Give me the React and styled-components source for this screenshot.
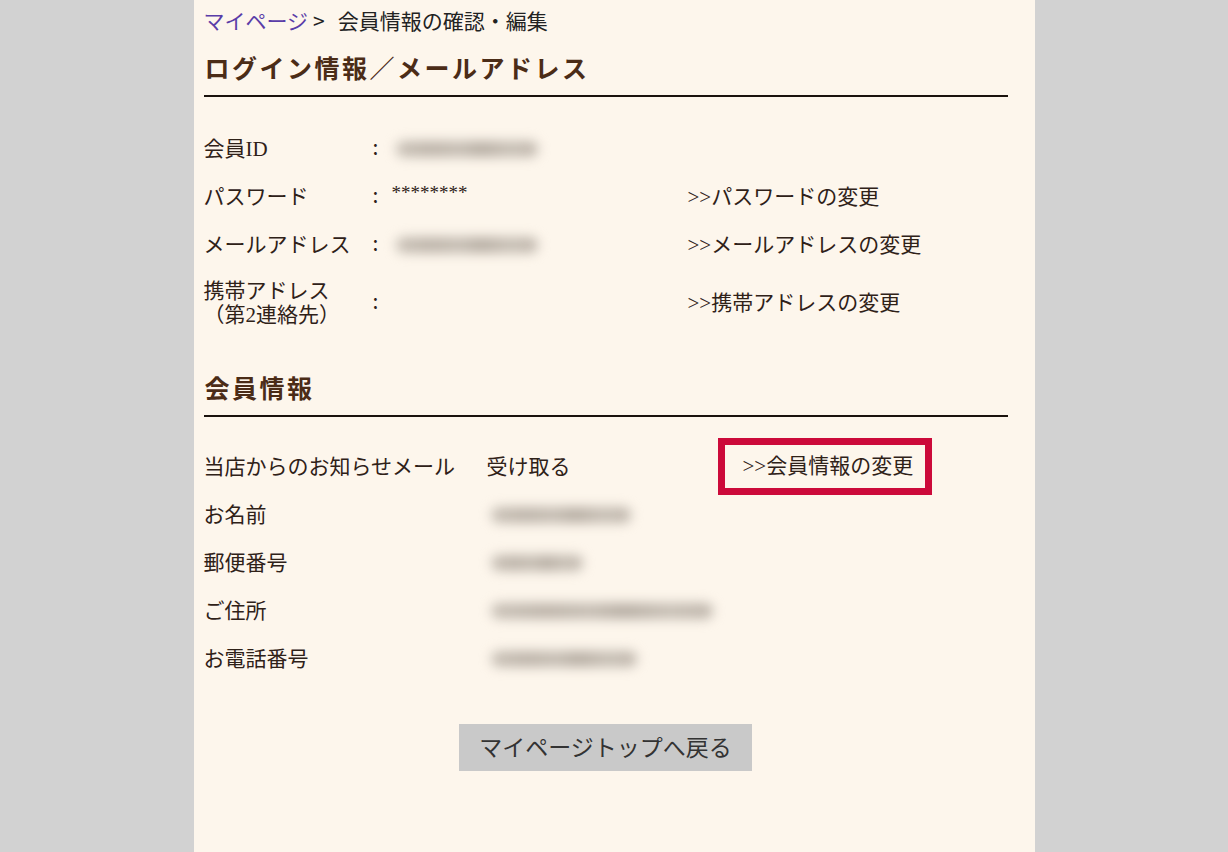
import React from 'react';
import styled, { createGlobalStyle } from 'styled-components';

const GlobalStyle = createGlobalStyle`
  html, body {
    margin: 0;
    padding: 0;
    background: #d2d2d2;
  }
`;

const serif = `"Liberation Serif", "Noto Sans CJK JP", serif`;
const sans = `"Noto Sans CJK JP", "Noto Sans", sans-serif`;

const Page = styled.div`
  width: 841px;
  min-height: 852px;
  margin: 0 auto;
  box-sizing: border-box;
  padding: 6px 27px 40px 10px;
  background: #fdf6ec;
  color: #2f2118;
  font-family: ${serif};
  font-size: 21px;
`;

const Breadcrumb = styled.div`
  font-family: ${sans};
  font-size: 21px;
  line-height: 28px;
  color: #222;
  a {
    color: #5a3da8;
    text-decoration: none;
  }
  span.sep {
    margin: 0 13px 0 5px;
  }
`;

const Heading = styled.h2`
  margin: ${(p) => p.$top}px 0 0;
  padding: 0 0 8px 1px;
  font-size: 25px;
  line-height: 34px;
  font-weight: 700;
  letter-spacing: 2.5px;
  color: #4b2c17;
  border-bottom: 2px solid #1a120d;
`;

const Table = styled.div`
  padding-top: ${(p) => p.$top}px;
`;

const Row = styled.div`
  display: grid;
  grid-template-columns: ${(p) => p.$cols};
  align-items: center;
  height: ${(p) => p.$h || 48}px;
  line-height: 24px;
`;

const Label = styled.div`
  white-space: nowrap;
`;

const Colon = styled.div`
  font-family: ${sans};
  margin-left: -2px;
  transform: translateY(-3px);
`;

const Value = styled.div`
  display: flex;
  align-items: center;
`;

const Blur = styled.span`
  display: inline-block;
  width: ${(p) => p.$w}px;
  height: 16px;
  margin-left: 4px;
  border-radius: 8px;
  background: linear-gradient(
    90deg,
    #c8c0b6 0%,
    #bcb3a9 25%,
    #c4bcb2 45%,
    #b6ada3 60%,
    #c6beb4 80%,
    #beb5ab 100%
  );
  filter: blur(6px);
`;

const Stars = styled.span`
  font-size: 19px;
  transform: translateY(-4px);
`;

const Link = styled.a`
  color: #2f2118;
  text-decoration: none;
  white-space: nowrap;
`;

const Boxed = styled.a`
  display: block;
  width: 214px;
  height: 57px;
  margin: -6px 0 -4px;
  box-sizing: border-box;
  border: 7px solid #cc0a3a;
  padding-left: 18px;
  line-height: 43px;
  color: #2f2118;
  text-decoration: none;
  white-space: nowrap;
`;

const ButtonWrap = styled.div`
  display: flex;
  justify-content: center;
  margin-top: 41px;
`;

const BackButton = styled.button`
  width: 293px;
  height: 47px;
  padding: 0 0 4px;
  border: none;
  background: #c9c9c9;
  color: #333;
  font-family: ${sans};
  font-size: 23px;
  cursor: pointer;
`;

const loginCols = '171px 17px 296px auto';
const memberCols = '283px 231px auto';

export default function App() {
  return (
    <>
      <GlobalStyle />
      <Page>
        <Breadcrumb>
          <a href="#">マイページ</a>
          <span className="sep">&gt;</span>会員情報の確認・編集
        </Breadcrumb>

        <Heading $top={19}>ログイン情報／メールアドレス</Heading>
        <Table $top={28}>
          <Row $cols={loginCols}>
            <Label>会員ID</Label>
            <Colon>:</Colon>
            <Value><Blur $w={142} /></Value>
            <div />
          </Row>
          <Row $cols={loginCols}>
            <Label>パスワード</Label>
            <Colon>:</Colon>
            <Value><Stars>********</Stars></Value>
            <Link href="#">&gt;&gt;パスワードの変更</Link>
          </Row>
          <Row $cols={loginCols}>
            <Label>メールアドレス</Label>
            <Colon>:</Colon>
            <Value><Blur $w={142} /></Value>
            <Link href="#">&gt;&gt;メールアドレスの変更</Link>
          </Row>
          <Row $cols={loginCols} $h={68}>
            <Label>
              携帯アドレス
              <br />
              （第2連絡先）
            </Label>
            <Colon>:</Colon>
            <Value />
            <Link href="#">&gt;&gt;携帯アドレスの変更</Link>
          </Row>
        </Table>

        <Heading $top={36}>会員情報</Heading>
        <Table $top={26}>
          <Row $cols={memberCols}>
            <Label>当店からのお知らせメール</Label>
            <Value>受け取る</Value>
            <Boxed href="#">&gt;&gt;会員情報の変更</Boxed>
          </Row>
          <Row $cols={memberCols}>
            <Label>お名前</Label>
            <Value><Blur $w={140} /></Value>
            <div />
          </Row>
          <Row $cols={memberCols}>
            <Label>郵便番号</Label>
            <Value><Blur $w={92} /></Value>
            <div />
          </Row>
          <Row $cols={memberCols}>
            <Label>ご住所</Label>
            <Value><Blur $w={222} /></Value>
            <div />
          </Row>
          <Row $cols={memberCols}>
            <Label>お電話番号</Label>
            <Value><Blur $w={146} /></Value>
            <div />
          </Row>
        </Table>

        <ButtonWrap>
          <BackButton>マイページトップへ戻る</BackButton>
        </ButtonWrap>
      </Page>
    </>
  );
}
